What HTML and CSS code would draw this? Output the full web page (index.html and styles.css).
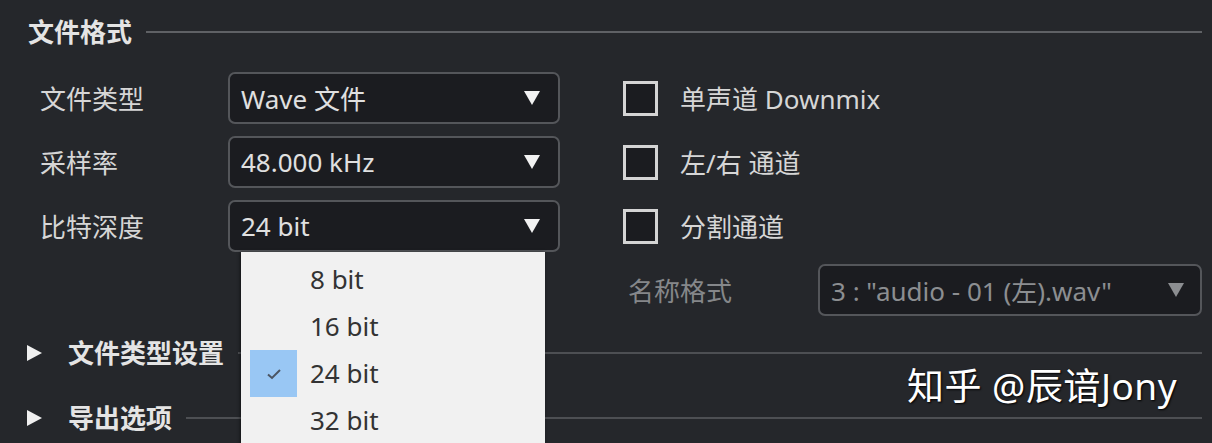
FILE: index.html
```html
<!DOCTYPE html>
<html>
<head>
<meta charset="utf-8">
<title>导出音频</title>
<link rel="stylesheet" href="styles.css">
</head>
<body>
<div class="panel">

  <div class="section-head">
    <span class="section-title">文件格式</span>
    <span class="rule"></span>
  </div>

  <div class="format-grid">
    <div class="label">文件类型</div>
    <div class="select"><span>Wave 文件</span><span class="arrow"></span></div>
    <div class="check"><span class="box"></span><span>单声道 Downmix</span></div>

    <div class="label">采样率</div>
    <div class="select"><span>48.000 kHz</span><span class="arrow"></span></div>
    <div class="check"><span class="box"></span><span>左/右 通道</span></div>

    <div class="label">比特深度</div>
    <div class="select open"><span>24 bit</span><span class="arrow"></span>
      <ul class="menu">
        <li>8 bit</li>
        <li>16 bit</li>
        <li class="checked"><span class="tick"><svg width="16" height="12" viewBox="0 0 16 12"><path d="M2 6.5 L6 10 L14 2" fill="none" stroke="#4b5563" stroke-width="2"/></svg></span>24 bit</li>
        <li>32 bit</li>
      </ul>
    </div>
    <div class="check"><span class="box"></span><span>分割通道</span></div>

    <div></div>
    <div></div>
    <div class="name-format">
      <span class="dim-label">名称格式</span>
      <div class="select dim"><span>3 : "audio - 01 (左).wav"</span><span class="arrow"></span></div>
    </div>
  </div>

  <div class="fold first">
    <span class="caret"></span>
    <span class="section-title">文件类型设置</span>
    <span class="rule"></span>
  </div>
  <div class="fold">
    <span class="caret"></span>
    <span class="section-title">导出选项</span>
    <span class="rule"></span>
  </div>

</div>
<div class="watermark">知乎 @辰谙Jony</div>
</body>
</html>
```

FILE: styles.css
```css
html, body {
  margin: 0;
  height: 100%;
  overflow: hidden;
}
body {
  background-color: #25272b;
  font-family: "Noto Sans", "Noto Sans CJK SC", sans-serif;
  font-size: 26px;
  color: #dcdcdc;
  position: relative;
}
.panel {
  padding: 16px 10px 0 28px;
}

.section-head {
  display: flex;
  align-items: center;
  height: 32px;
}
.section-title {
  font-weight: bold;
  color: #e4e4e4;
  line-height: 32px;
}
.rule {
  flex: 1;
  height: 0;
  border-top: 2px solid #4d4f53;
  margin-left: 14px;
}
.section-head .rule {
  border-top-color: #5f6165;
}

.format-grid {
  display: grid;
  grid-template-columns: 188px 332px 1fr;
  grid-auto-rows: 52px;
  row-gap: 12px;
  margin: 24px 0 0 12px;
  align-items: center;
}
.label {
  color: #d6d6d6;
}

.select {
  position: relative;
  box-sizing: border-box;
  height: 52px;
  display: flex;
  align-items: center;
  justify-content: space-between;
  padding: 0 18px 0 11px;
  background-color: #1b1c20;
  border: 2px solid #54565a;
  border-radius: 7px;
  color: #e0e0e0;
}
.arrow {
  width: 0;
  height: 0;
  border-left: 8px solid transparent;
  border-right: 8px solid transparent;
  border-top: 14px solid #f2f2f2;
}

.check {
  display: flex;
  align-items: center;
  margin-left: 63px;
  color: #d6d6d6;
}
.box {
  box-sizing: border-box;
  width: 35px;
  height: 35px;
  border: 3px solid #d4d4d4;
  background-color: #1b1c20;
  margin-right: 22px;
}

.name-format {
  display: flex;
  align-items: center;
  margin-left: 68px;
}
.dim-label {
  width: 190px;
  color: #85878a;
}
.select.dim {
  width: 384px;
  color: #8c8e91;
  padding-right: 16px;
}
.select.dim .arrow {
  border-top-color: #8c8e91;
}

.menu {
  position: absolute;
  top: 50px;
  left: 11px;
  width: 304px;
  height: 200px;
  margin: 0;
  padding: 4px 0 0 0;
  list-style: none;
  background-color: #f1f1f1;
  box-shadow: -1px 0 3px rgba(0, 0, 0, 0.5);
  z-index: 2;
}
.menu li {
  position: relative;
  height: 47px;
  line-height: 47px;
  padding-left: 69px;
  color: #333333;
}
.tick {
  position: absolute;
  left: 9px;
  top: 0;
  width: 47px;
  height: 47px;
  background-color: #99c7f4;
  display: flex;
  align-items: center;
  justify-content: center;
}

.fold {
  display: flex;
  align-items: center;
  height: 40px;
  margin-top: 25px;
}
.fold.first {
  margin-top: 17px;
}
.caret {
  width: 0;
  height: 0;
  border-top: 8px solid transparent;
  border-bottom: 8px solid transparent;
  border-left: 15px solid #f0f0f0;
  margin: 0 26px 0 -1px;
}

.watermark {
  position: absolute;
  left: 907px;
  top: 357px;
  font-size: 37px;
  letter-spacing: 0.5px;
  color: #ffffff;
  text-shadow: 1px 1px 2px #000000;
  z-index: 3;
}
```
